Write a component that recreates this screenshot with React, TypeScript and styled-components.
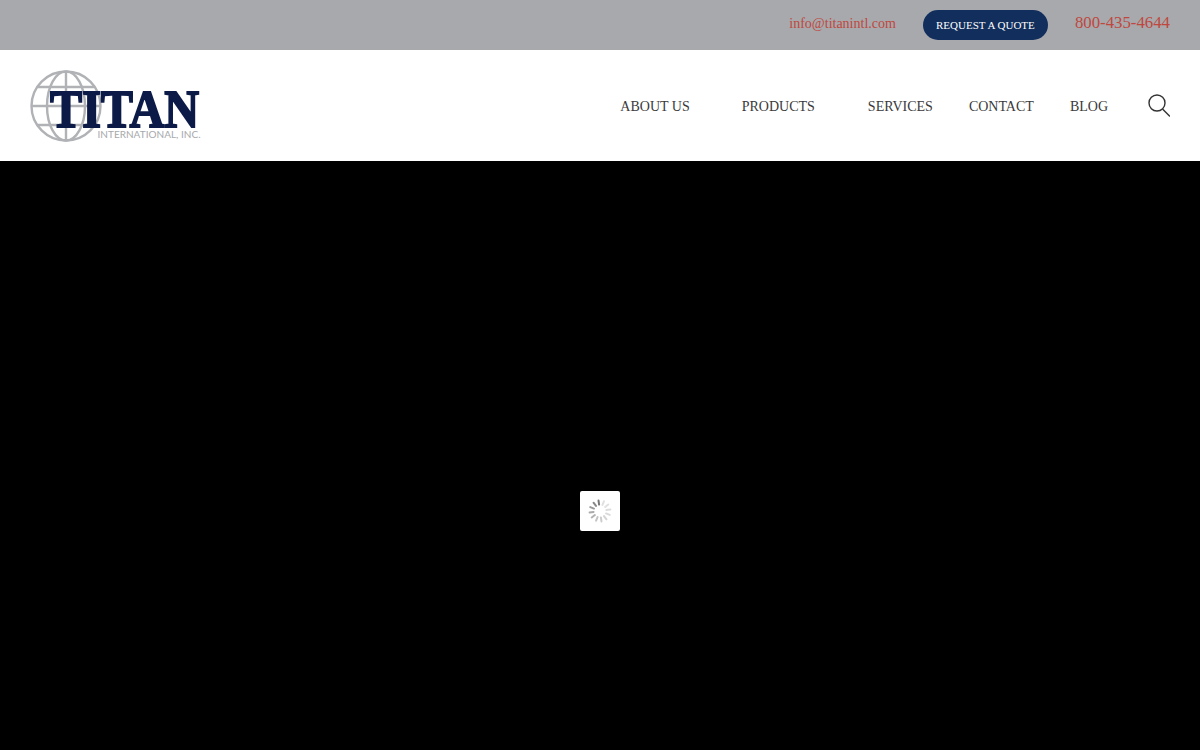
import React from 'react'
import styled, { createGlobalStyle } from 'styled-components'

const GlobalStyle = createGlobalStyle`
  html, body {
    margin: 0;
    padding: 0;
    background: #000;
    font-family: "Liberation Serif", "Times New Roman", serif;
  }
`

const Page = styled.div`
  width: 1200px;
  height: 750px;
  display: flex;
  flex-direction: column;
  overflow: hidden;
`

const TopBar = styled.div`
  flex: none;
  height: 50px;
  background: #a7a9ac;
  display: flex;
  justify-content: flex-end;
  align-items: center;
  padding-right: 30px;
`

const Email = styled.a`
  font-size: 14px;
  color: #c0473e;
  margin-right: 27px;
  position: relative;
  top: -1px;
`

const QuoteButton = styled.a`
  width: 125px;
  height: 30px;
  border-radius: 15px;
  background: #112e5c;
  color: #fff;
  font-size: 11px;
  display: flex;
  align-items: center;
  justify-content: center;
  margin-right: 27px;
`

const Phone = styled.a`
  font-size: 16.800px;
  color: #c0473e;
  position: relative;
  top: -2px;
`

const Header = styled.header`
  flex: none;
  height: 111px;
  background: #fff;
  display: flex;
  align-items: center;
  justify-content: space-between;
  padding: 0 30px;
`

const LogoSvg = styled.svg`
  display: block;
  width: 172px;
  height: 74px;
  overflow: visible;
`

const Nav = styled.nav`
  display: flex;
  align-items: center;
`

const NavItem = styled.a<{ $gap: number }>`
  font-size: 14px;
  color: #3a3a3a;
  margin-right: ${(p) => p.$gap}px;
  position: relative;
  top: 1px;
`

const SearchSvg = styled.svg`
  display: block;
  margin-bottom: 2px;
`

const Hero = styled.main`
  flex: none;
  height: 700px;
  background: #000;
  display: flex;
  align-items: center;
  justify-content: center;
`

const LoaderBox = styled.div`
  width: 40px;
  height: 40px;
  background: #fff;
  border-radius: 2px;
  display: flex;
  align-items: center;
  justify-content: center;
`

const Logo = () => (
  <LogoSvg viewBox="0 0 172 74">
    <g fill="none" stroke="#b0b2b5" strokeWidth="2.400">
      <circle cx="36" cy="37" r="34.500" />
      <ellipse cx="36" cy="37" rx="19" ry="34.500" />
      <path d="M36 2.500V71.500M1.500 37H70.500M7.200 18H64.800M7.200 56H64.800" />
    </g>
    <text
      x="20"
      y="58"
      fontFamily="'Liberation Serif', serif"
      fontWeight="700"
      fontSize="53"
      fill="#0c1a48"
      textLength="149"
      lengthAdjust="spacingAndGlyphs"
      stroke="#0c1a48"
      strokeWidth="1.800"
    >
      TITAN
    </text>
    <text
      x="67.500"
      y="68.500"
      fontFamily="Lato, sans-serif"
      fontSize="10"
      fill="#a7a9ac"
      textLength="103"
      lengthAdjust="spacing"
    >
      INTERNATIONAL, INC.
    </text>
  </LogoSvg>
)

const spokeOpacity = [0.8, 0.18, 0.18, 0.2, 0.22, 0.25, 0.3, 0.35, 0.45, 0.5, 0.6, 0.7]

const Spinner = () => (
  <svg width="24" height="24" viewBox="0 0 24 24">
    {spokeOpacity.map((o, i) => (
      <rect
        key={i}
        x="11"
        y="0.500"
        width="2"
        height="6"
        rx="1"
        fill="#555"
        opacity={o}
        transform={`rotate(${i * 30 - 8} 12 12)`}
      />
    ))}
  </svg>
)

const SearchIcon = () => (
  <SearchSvg width="22" height="24" viewBox="0 0 22 24" fill="none" stroke="#333" strokeWidth="1.400">
    <circle cx="9" cy="10" r="8" />
    <path d="M15 16.500L21.500 23" strokeLinecap="round" />
  </SearchSvg>
)

const App = () => {
  return (
    <Page>
      <GlobalStyle />
      <TopBar>
        <Email>info@titanintl.com</Email>
        <QuoteButton>REQUEST A QUOTE</QuoteButton>
        <Phone>800-435-4644</Phone>
      </TopBar>
      <Header>
        <Logo />
        <Nav>
          <NavItem $gap={52}>ABOUT US</NavItem>
          <NavItem $gap={53}>PRODUCTS</NavItem>
          <NavItem $gap={36}>SERVICES</NavItem>
          <NavItem $gap={36}>CONTACT</NavItem>
          <NavItem $gap={40}>BLOG</NavItem>
          <SearchIcon />
        </Nav>
      </Header>
      <Hero>
        <LoaderBox>
          <Spinner />
        </LoaderBox>
      </Hero>
    </Page>
  )
}

export default App
